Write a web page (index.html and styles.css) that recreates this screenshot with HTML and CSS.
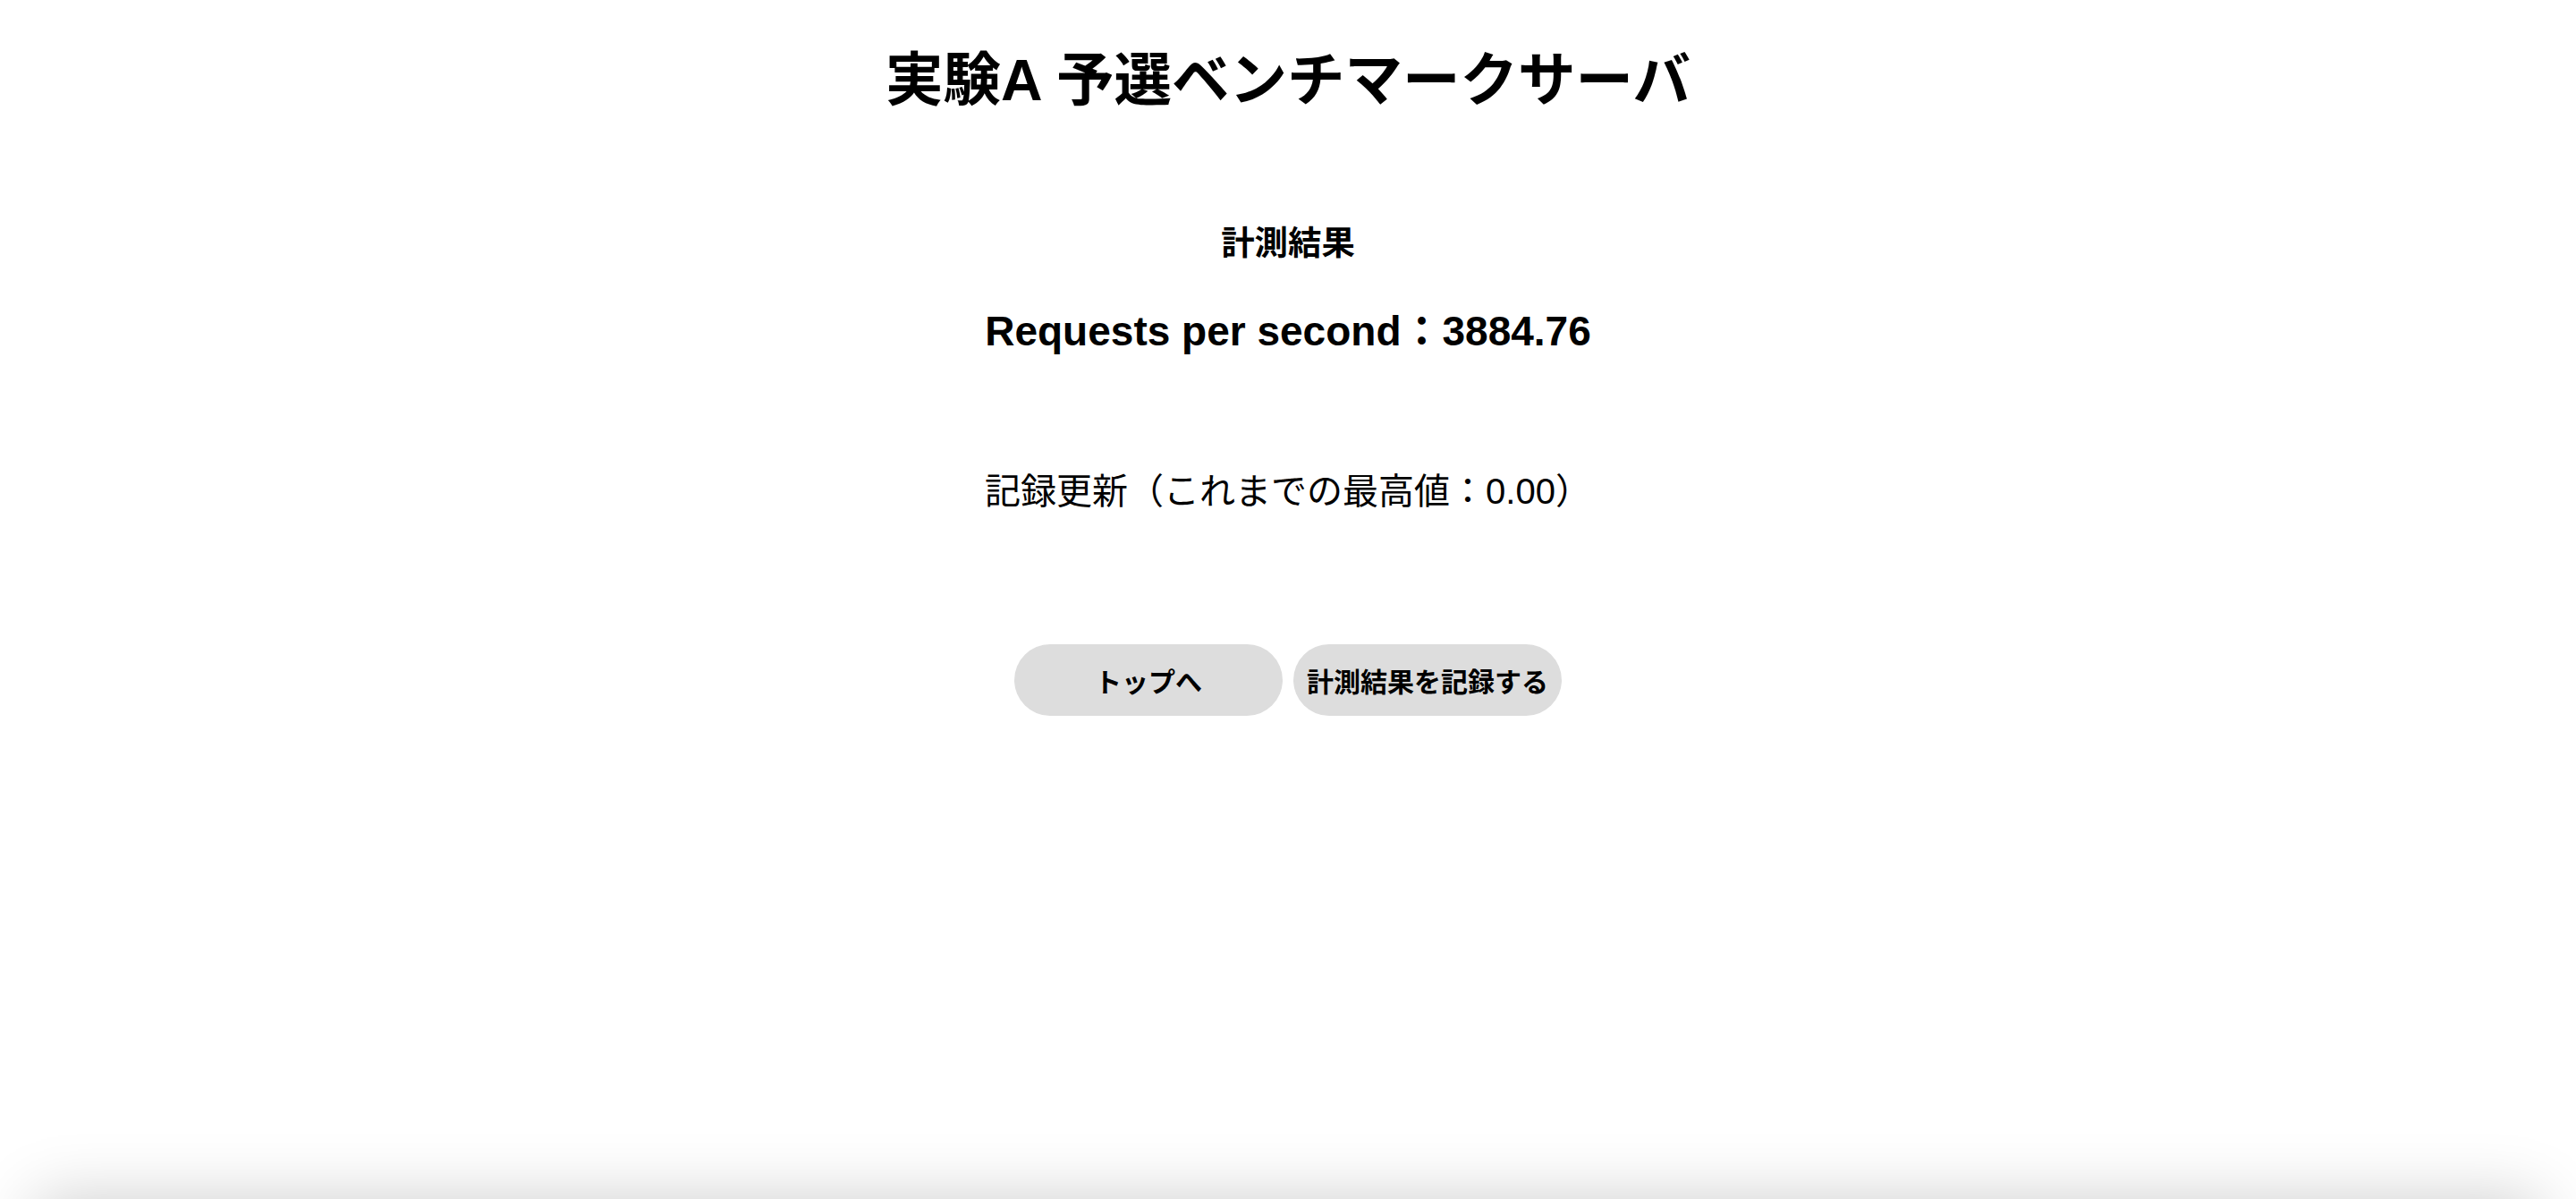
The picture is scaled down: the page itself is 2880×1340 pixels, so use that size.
FILE: index.html
```html
<!DOCTYPE html>
<html lang="ja">
<head>
<meta charset="utf-8">
<title>実験A 予選ベンチマークサーバ</title>
<link rel="stylesheet" href="styles.css">
</head>
<body>
<main class="page">
  <h1 class="title">実験A 予選ベンチマークサーバ</h1>
  <h3 class="section-title">計測結果</h3>
  <h2 class="score">Requests per second：3884.76</h2>
  <p class="record">記録更新（これまでの最高値：0.00）</p>
  <div class="actions">
    <button class="btn" type="button">トップへ</button>
    <button class="btn" type="button">計測結果を記録する</button>
  </div>
</main>
<div class="panel"></div>
</body>
</html>
```

FILE: styles.css
```css
html, body {
  margin: 0;
  padding: 0;
  background: #ffffff;
}

body {
  font-family: "Liberation Sans", "Noto Sans CJK JP", sans-serif;
  color: #000000;
  overflow: hidden;
}

.page {
  min-height: 1340px;
  display: flex;
  flex-direction: column;
  align-items: center;
  text-align: center;
  box-sizing: border-box;
  padding-top: 42px;
}

.title {
  margin: 0;
  font-size: 64.5px;
  line-height: 96px;
  font-weight: 700;
}

.section-title {
  margin: 106px 0 0;
  font-size: 37.44px;
  line-height: 56px;
  font-weight: 700;
}

.score {
  margin: 34px 0 0;
  font-size: 46px;
  line-height: 72px;
  font-weight: 700;
}

.record {
  margin: 113px 0 0;
  font-size: 40px;
  line-height: 60px;
  font-weight: 400;
}

.actions {
  margin-top: 141px;
  display: flex;
  gap: 12px;
}

.btn {
  width: 300px;
  height: 80px;
  border: none;
  border-radius: 40px;
  background: #dddddd;
  color: #000000;
  font-family: "Liberation Sans", "Noto Sans CJK JP", sans-serif;
  font-size: 30px;
  font-weight: 700;
  padding: 0;
  cursor: pointer;
}

.panel {
  margin: 0 40px;
  height: 300px;
  background: #ffffff;
  box-shadow: 0 0 70px rgba(0, 0, 0, 0.2);
}
```
